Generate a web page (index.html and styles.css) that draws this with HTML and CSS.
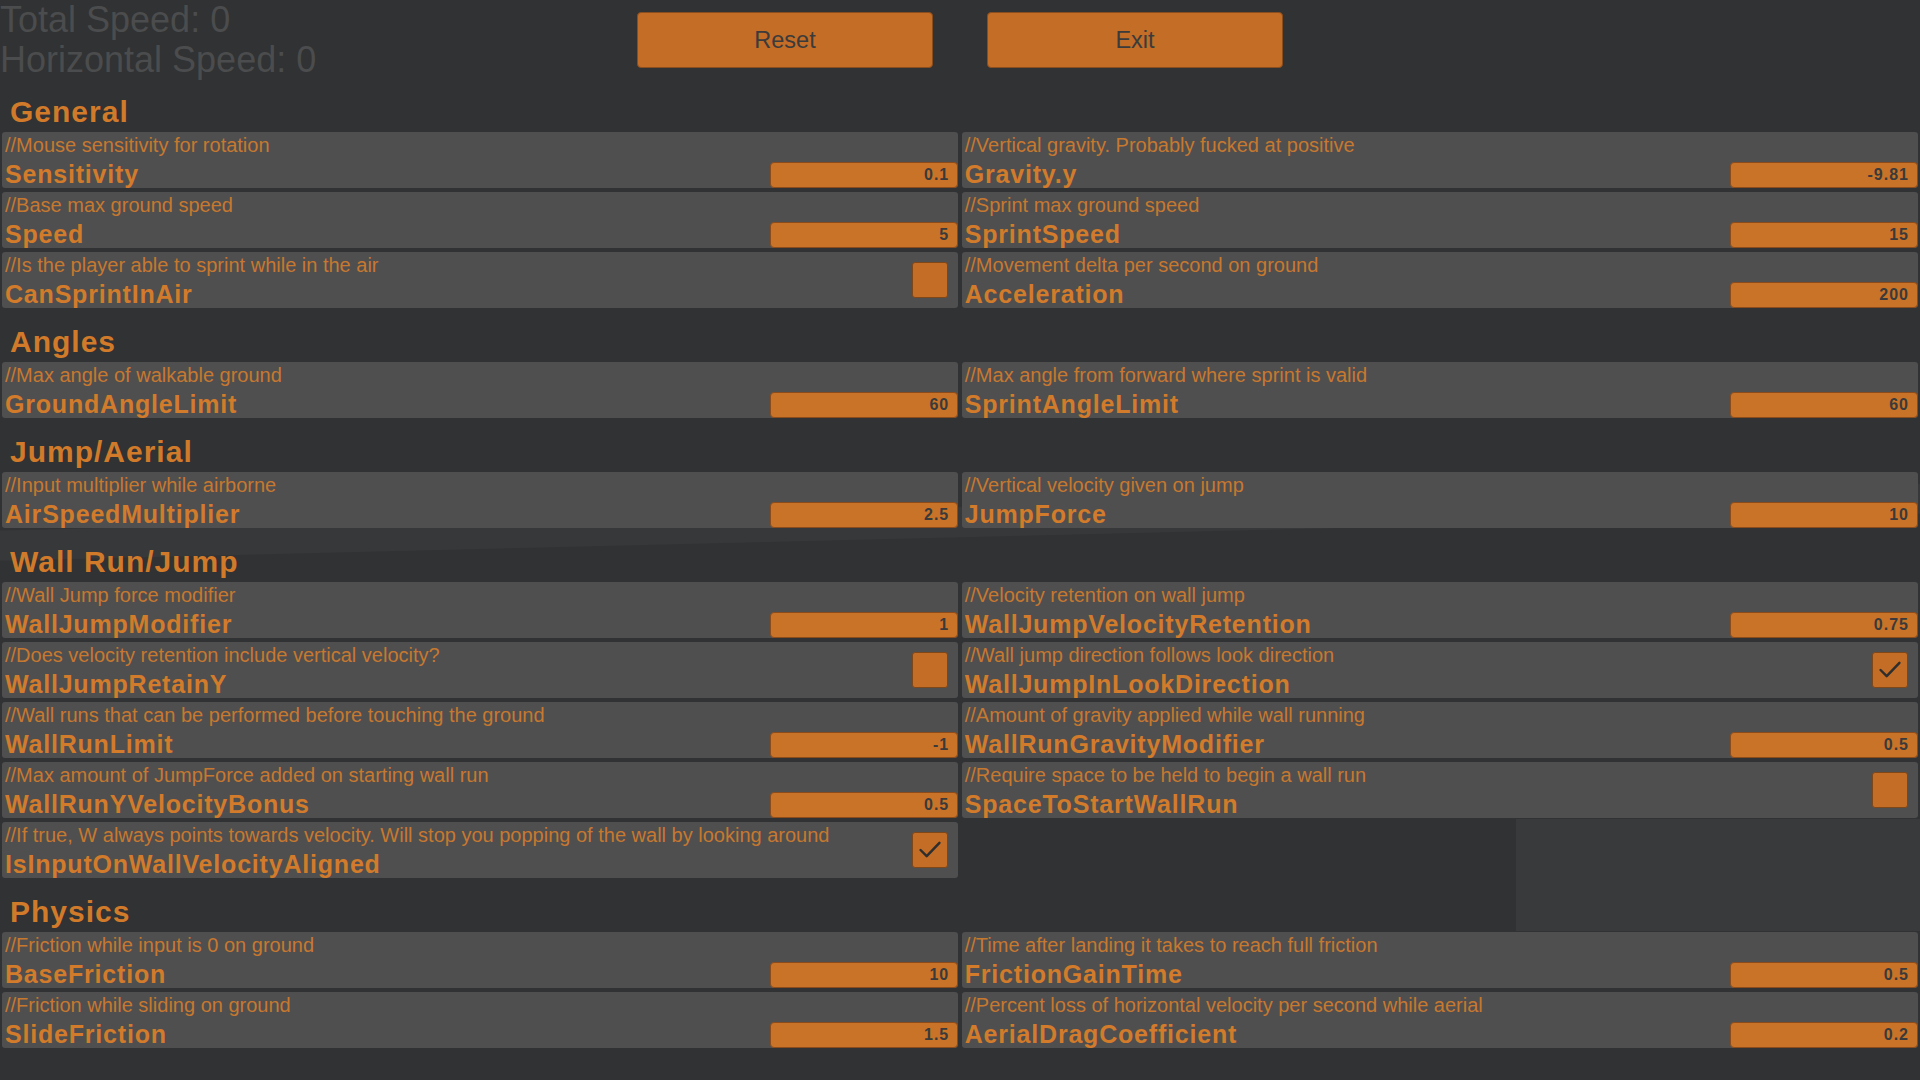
FILE: index.html
```html
<!DOCTYPE html>
<html>
<head>
<meta charset="utf-8">
<link rel="stylesheet" href="styles.css">
</head>
<body>
<div class="page">
  <div class="topbar">
    <div class="stats">
      <div>Total Speed: 0</div>
      <div>Horizontal Speed: 0</div>
    </div>
    <div class="btn">Reset</div>
    <div class="btn">Exit</div>
  </div>

  <div class="section">
    <div class="section-title">General</div>
    <div class="grid">
      <div class="row"><div class="text"><div class="comment">//Mouse sensitivity for rotation</div><div class="label">Sensitivity</div></div><div class="slider">0.1</div></div>
      <div class="row"><div class="text"><div class="comment">//Vertical gravity. Probably fucked at positive</div><div class="label">Gravity.y</div></div><div class="slider">-9.81</div></div>
      <div class="row"><div class="text"><div class="comment">//Base max ground speed</div><div class="label">Speed</div></div><div class="slider">5</div></div>
      <div class="row"><div class="text"><div class="comment">//Sprint max ground speed</div><div class="label">SprintSpeed</div></div><div class="slider">15</div></div>
      <div class="row"><div class="text"><div class="comment">//Is the player able to sprint while in the air</div><div class="label">CanSprintInAir</div></div><div class="check"></div></div>
      <div class="row"><div class="text"><div class="comment">//Movement delta per second on ground</div><div class="label">Acceleration</div></div><div class="slider">200</div></div>
    </div>
  </div>

  <div class="section">
    <div class="section-title">Angles</div>
    <div class="grid">
      <div class="row"><div class="text"><div class="comment">//Max angle of walkable ground</div><div class="label">GroundAngleLimit</div></div><div class="slider">60</div></div>
      <div class="row"><div class="text"><div class="comment">//Max angle from forward where sprint is valid</div><div class="label">SprintAngleLimit</div></div><div class="slider">60</div></div>
    </div>
  </div>

  <div class="section">
    <div class="section-title">Jump/Aerial</div>
    <div class="grid">
      <div class="row"><div class="text"><div class="comment">//Input multiplier while airborne</div><div class="label">AirSpeedMultiplier</div></div><div class="slider">2.5</div></div>
      <div class="row"><div class="text"><div class="comment">//Vertical velocity given on jump</div><div class="label">JumpForce</div></div><div class="slider">10</div></div>
    </div>
  </div>

  <div class="section">
    <div class="section-title">Wall Run/Jump</div>
    <div class="grid">
      <div class="row"><div class="text"><div class="comment">//Wall Jump force modifier</div><div class="label">WallJumpModifier</div></div><div class="slider">1</div></div>
      <div class="row"><div class="text"><div class="comment">//Velocity retention on wall jump</div><div class="label">WallJumpVelocityRetention</div></div><div class="slider">0.75</div></div>
      <div class="row"><div class="text"><div class="comment">//Does velocity retention include vertical velocity?</div><div class="label">WallJumpRetainY</div></div><div class="check"></div></div>
      <div class="row"><div class="text"><div class="comment">//Wall jump direction follows look direction</div><div class="label">WallJumpInLookDirection</div></div><div class="check"><svg viewBox="0 0 36 36" width="34" height="34"><polyline points="8,18 14.5,24.5 28,10.5" fill="none" stroke="#2e2e2e" stroke-width="2.6" stroke-linecap="round" stroke-linejoin="round"/></svg></div></div>
      <div class="row"><div class="text"><div class="comment">//Wall runs that can be performed before touching the ground</div><div class="label">WallRunLimit</div></div><div class="slider">-1</div></div>
      <div class="row"><div class="text"><div class="comment">//Amount of gravity applied while wall running</div><div class="label">WallRunGravityModifier</div></div><div class="slider">0.5</div></div>
      <div class="row"><div class="text"><div class="comment">//Max amount of JumpForce added on starting wall run</div><div class="label">WallRunYVelocityBonus</div></div><div class="slider">0.5</div></div>
      <div class="row"><div class="text"><div class="comment">//Require space to be held to begin a wall run</div><div class="label">SpaceToStartWallRun</div></div><div class="check"></div></div>
      <div class="row"><div class="text"><div class="comment">//If true, W always points towards velocity. Will stop you popping of the wall by looking around</div><div class="label">IsInputOnWallVelocityAligned</div></div><div class="check"><svg viewBox="0 0 36 36" width="34" height="34"><polyline points="8,18 14.5,24.5 28,10.5" fill="none" stroke="#2e2e2e" stroke-width="2.6" stroke-linecap="round" stroke-linejoin="round"/></svg></div></div>
    </div>
  </div>

  <div class="section">
    <div class="section-title">Physics</div>
    <div class="grid">
      <div class="row"><div class="text"><div class="comment">//Friction while input is 0 on ground</div><div class="label">BaseFriction</div></div><div class="slider">10</div></div>
      <div class="row"><div class="text"><div class="comment">//Time after landing it takes to reach full friction</div><div class="label">FrictionGainTime</div></div><div class="slider">0.5</div></div>
      <div class="row"><div class="text"><div class="comment">//Friction while sliding on ground</div><div class="label">SlideFriction</div></div><div class="slider">1.5</div></div>
      <div class="row"><div class="text"><div class="comment">//Percent loss of horizontal velocity per second while aerial</div><div class="label">AerialDragCoefficient</div></div><div class="slider">0.2</div></div>
    </div>
  </div>
</div>
</body>
</html>
```

FILE: styles.css
```css
html, body {
  margin: 0;
  padding: 0;
}

body {
  width: 1920px;
  height: 1080px;
  overflow: hidden;
  font-family: "Liberation Sans", Arial, sans-serif;
  background:
    linear-gradient(#393a3c, #393a3c) no-repeat 1516px 819px / 404px 112px,
    linear-gradient(178.6deg, transparent 0, transparent 530px, #37383a 531px, #37383a 560px, transparent 561px) no-repeat 0 0 / 1920px 1080px,
    #313233;
}

.page {
  width: 1920px;
}

.topbar {
  display: flex;
  height: 78px;
}

.stats {
  width: 637px;
  font-size: 36px;
  line-height: 40px;
  color: #4b4c4d;
  white-space: nowrap;
}

.btn {
  width: 296px;
  height: 56px;
  margin-top: 12px;
  box-sizing: border-box;
  background: #c46d27;
  border: 1px solid #8a4d1d;
  border-radius: 4px;
  display: flex;
  align-items: center;
  justify-content: center;
  font-size: 23.5px;
  color: #3b3b3b;
}

.btn + .btn {
  margin-left: 54px;
}

.section {
  margin-top: 15.5px;
}

.section-title {
  font-size: 30px;
  line-height: 36px;
  font-weight: bold;
  letter-spacing: 1px;
  color: #d07a2a;
  margin: 0 0 2.5px 10px;
}

.grid {
  display: grid;
  grid-template-columns: 1fr 1fr;
  gap: 4px 3.5px;
  padding: 0 2px;
}

.row {
  height: 56px;
  box-sizing: border-box;
  background: #4f4f4f;
  border-radius: 3px;
  display: flex;
  padding-left: 3px;
}

.text {
  flex: 1;
  min-width: 0;
}

.comment {
  font-size: 20px;
  line-height: 22px;
  margin-top: 2px;
  color: #c7782f;
  white-space: nowrap;
}

.label {
  font-size: 25px;
  line-height: 28px;
  font-weight: bold;
  letter-spacing: 0.8px;
  margin-top: 4px;
  color: #d27b2b;
  white-space: nowrap;
}

.slider {
  align-self: flex-end;
  flex-shrink: 0;
  width: 188px;
  height: 26px;
  box-sizing: border-box;
  background: #c97329;
  border: 1px solid #8b4b1a;
  border-radius: 4px;
  display: flex;
  align-items: center;
  justify-content: flex-end;
  padding-right: 8px;
  font-size: 16px;
  font-weight: bold;
  letter-spacing: 1px;
  color: #3a3a3a;
}

.check {
  align-self: center;
  flex-shrink: 0;
  width: 36px;
  height: 36px;
  margin-right: 10px;
  box-sizing: border-box;
  background: #c46d26;
  border: 1px solid #7f4618;
  border-radius: 3px;
  display: flex;
  align-items: center;
  justify-content: center;
}

.check svg {
  display: block;
}
```
